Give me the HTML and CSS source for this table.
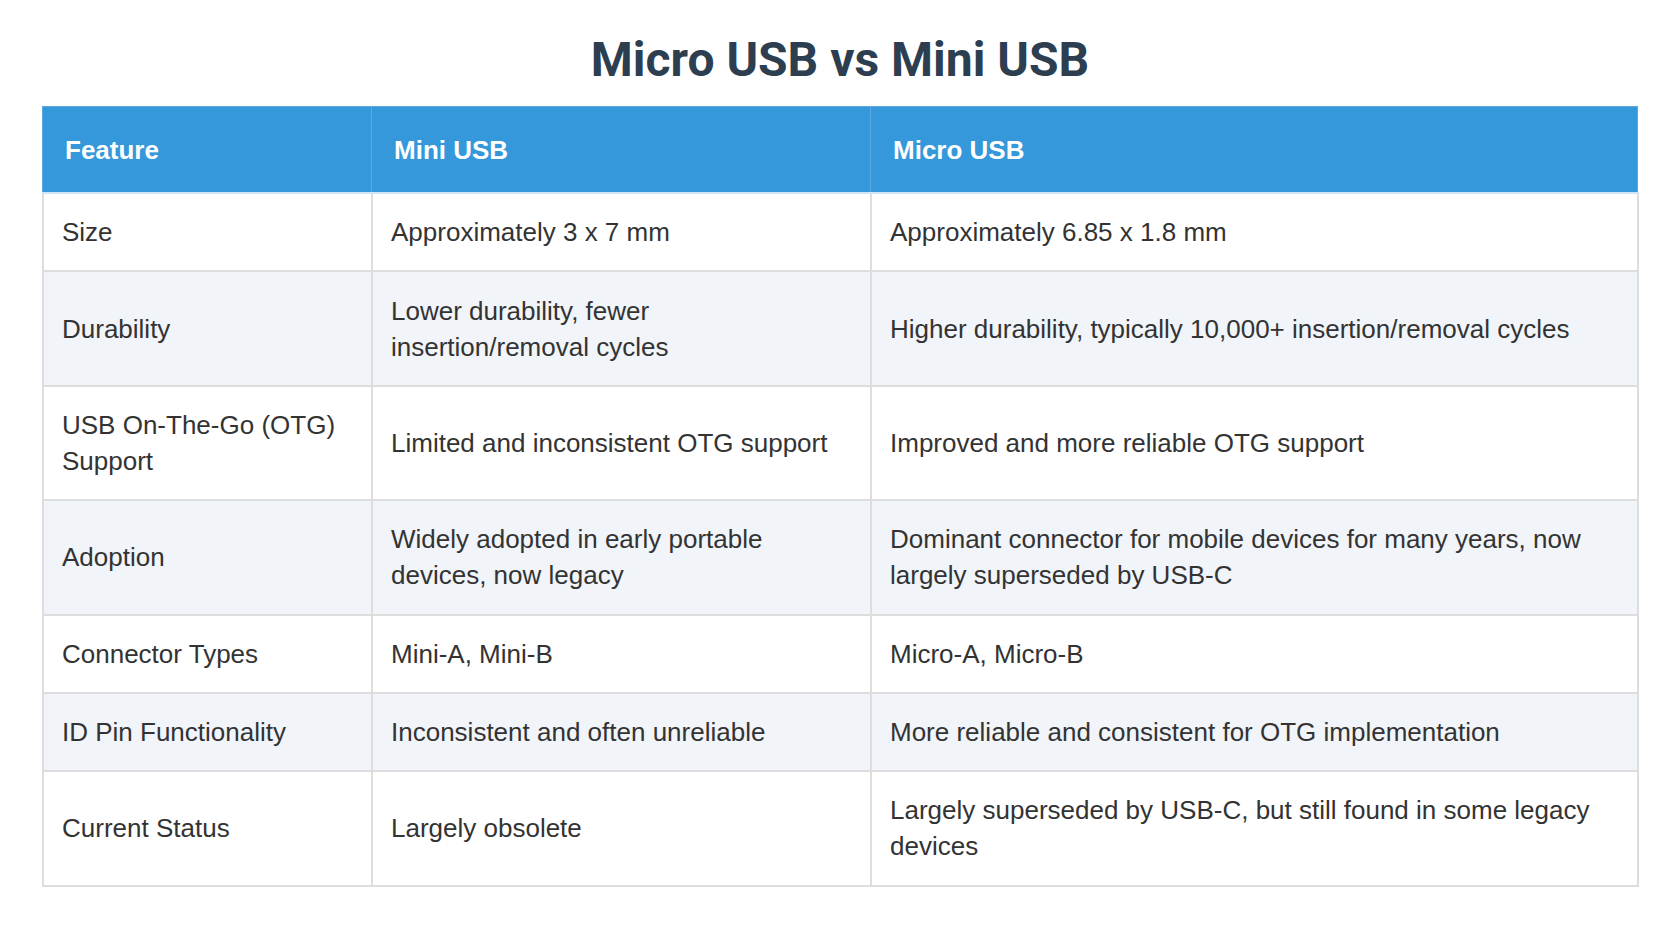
FILE: index.html
```html
<!DOCTYPE html>
<html lang="en">
<head>
<meta charset="utf-8">
<title>Micro USB vs Mini USB</title>
<link rel="stylesheet" href="styles.css">
</head>
<body>
<main class="page">
  <h1 class="title">Micro USB vs Mini USB</h1>
  <table class="compare">
    <colgroup>
      <col class="col-feature">
      <col class="col-mini">
      <col class="col-micro">
    </colgroup>
    <thead>
      <tr>
        <th>Feature</th>
        <th>Mini USB</th>
        <th>Micro USB</th>
      </tr>
    </thead>
    <tbody>
      <tr>
        <td>Size</td>
        <td>Approximately 3 x 7 mm</td>
        <td>Approximately 6.85 x 1.8 mm</td>
      </tr>
      <tr>
        <td>Durability</td>
        <td>Lower durability, fewer insertion/removal cycles</td>
        <td>Higher durability, typically 10,000+ insertion/removal cycles</td>
      </tr>
      <tr>
        <td>USB On-The-Go (OTG) Support</td>
        <td>Limited and inconsistent OTG support</td>
        <td>Improved and more reliable OTG support</td>
      </tr>
      <tr>
        <td>Adoption</td>
        <td>Widely adopted in early portable devices, now legacy</td>
        <td>Dominant connector for mobile devices for many years, now largely superseded by USB-C</td>
      </tr>
      <tr>
        <td>Connector Types</td>
        <td>Mini-A, Mini-B</td>
        <td>Micro-A, Micro-B</td>
      </tr>
      <tr>
        <td>ID Pin Functionality</td>
        <td>Inconsistent and often unreliable</td>
        <td>More reliable and consistent for OTG implementation</td>
      </tr>
      <tr>
        <td>Current Status</td>
        <td>Largely obsolete</td>
        <td>Largely superseded by USB-C, but still found in some legacy devices</td>
      </tr>
    </tbody>
  </table>
</main>
</body>
</html>
```

FILE: styles.css
```css
html, body {
  margin: 0;
  padding: 0;
  background: #ffffff;
}

.page {
  padding: 32px 0 40px;
  font-family: "Liberation Sans", Arial, sans-serif;
  color: #333333;
}

.title {
  margin: 0 0 18px;
  font-family: Roboto, "Liberation Sans", sans-serif;
  font-weight: 700;
  font-size: 48px;
  line-height: 56px;
  color: #2c3e50;
  text-align: center;
}

.compare {
  width: 1597px;
  margin: 0 auto;
  border-collapse: collapse;
  table-layout: fixed;
  font-size: 26px;
  line-height: 36px;
}

.col-feature { width: 329px; }
.col-mini { width: 499px; }
.col-micro { width: auto; }

.compare th {
  background: #3498db;
  color: #ffffff;
  font-weight: 700;
  text-align: left;
  padding: 24.5px 24px 24.5px 22px;
  border: 1px solid #5aa9e0;
  border-bottom: 2px solid #d0e6f6;
}

.compare td {
  padding: 20.2px 21px 20.2px 18.5px;
  border: 2px solid #dddddd;
  vertical-align: middle;
}

.compare tbody tr:nth-child(even) td {
  background: #f1f4f9;
}
```
